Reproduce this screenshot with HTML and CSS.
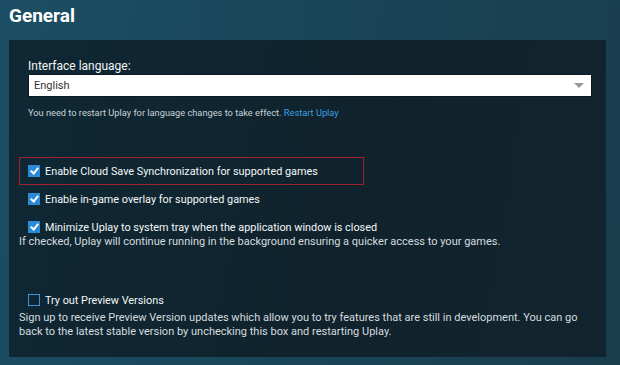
FILE: index.html
```html
<!DOCTYPE html>
<html lang="en">
<head>
    <meta charset="UTF-8">
    <title>General</title>
    <link rel="stylesheet" href="styles.css">
</head>
<body>
    <h1 class="page-title">General</h1>

    <div class="settings-panel">
        <div class="field">
            <label class="field-label">Interface language:</label>
            <div class="select-box">
                <span>English</span>
                <span class="select-arrow"></span>
            </div>
            <p class="hint">You need to restart Uplay for language changes to take effect. <a href="#" class="link">Restart Uplay</a></p>
        </div>

        <div class="options">
            <div class="option highlighted">
                <span class="check checked"></span>
                <span class="option-label">Enable Cloud Save Synchronization for supported games</span>
            </div>
            <div class="option">
                <span class="check checked"></span>
                <span class="option-label">Enable in-game overlay for supported games</span>
            </div>
            <div class="option">
                <span class="check checked"></span>
                <span class="option-label">Minimize Uplay to system tray when the application window is closed</span>
            </div>
            <p class="desc">If checked, Uplay will continue running in the background ensuring a quicker access to your games.</p>
        </div>

        <div class="options preview">
            <div class="option">
                <span class="check"></span>
                <span class="option-label">Try out Preview Versions</span>
            </div>
            <p class="desc">Sign up to receive Preview Version updates which allow you to try features that are still in development. You can go back to the latest stable version by unchecking this box and restarting Uplay.</p>
        </div>
    </div>
</body>
</html>
```

FILE: styles.css
```css
* {
    box-sizing: border-box;
    margin: 0;
    padding: 0;
}

body {
    font-family: Roboto, 'Liberation Sans', sans-serif;
    width: 620px;
    height: 365px;
    overflow: hidden;
    background: linear-gradient(100deg, #1b4e64 0%, #194659 45%, #1a3d4d 100%);
    color: #e6ecef;
    padding: 3px 14px 0 9px;
}

.page-title {
    font-size: 19px;
    font-weight: 700;
    color: #ffffff;
    line-height: 26px;
    margin-bottom: 11px;
}

.settings-panel {
    background: linear-gradient(100deg, #0f2834 0%, #10222c 60%, #12252f 100%);
    height: 317px;
    padding: 19px 14px 0 10px;
}

.field {
    padding-left: 9px;
}

.field-label {
    display: block;
    font-size: 12px;
    line-height: 15px;
    color: #f2f5f6;
}

.select-box {
    height: 23px;
    background: #ffffff;
    border: 1px solid #0b1a21;
    display: flex;
    align-items: center;
    justify-content: space-between;
    padding: 0 7px 0 5px;
    font-size: 11px;
    color: #333;
}

.select-arrow {
    width: 0;
    height: 0;
    border-left: 5px solid transparent;
    border-right: 5px solid transparent;
    border-top: 5px solid #9a9a9a;
}

.hint {
    font-size: 9.25px;
    line-height: 14px;
    margin-top: 9px;
    color: #c9d2d6;
}

.link {
    color: #3d9de0;
    text-decoration: none;
}

.options {
    margin-top: 37px;
}

.option {
    display: flex;
    align-items: center;
    gap: 5px;
    height: 28px;
    padding: 0 9px;
    font-size: 10.85px;
    color: #f4f7f8;
}

.option.highlighted {
    width: 345px;
    border: 1.5px solid #a1222e;
    padding: 0 8px;
}

.check {
    width: 12px;
    height: 12px;
    flex: none;
    border: 1.5px solid #3b93d6;
    position: relative;
}

.check.checked {
    background: #2a8ad6;
    border-color: #2a8ad6;
}

.check.checked::after {
    content: '';
    position: absolute;
    left: 2.5px;
    top: 0px;
    width: 3px;
    height: 6px;
    border-right: 2px solid #ffffff;
    border-bottom: 2px solid #ffffff;
    transform: rotate(40deg);
}

.desc {
    font-size: 11px;
    line-height: 14px;
    color: #d5dcdf;
    margin-top: -6px;
}

.preview {
    margin-top: 37px;
}

.preview .desc {
    margin-top: -3px;
}
```
